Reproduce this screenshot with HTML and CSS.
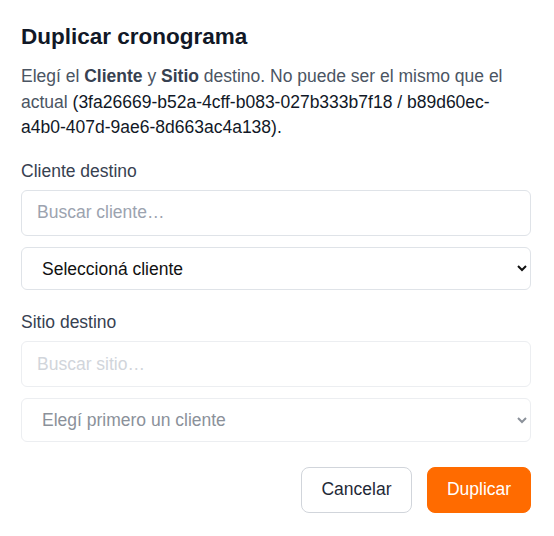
FILE: index.html
```html
<!DOCTYPE html>
<html lang="es">
<head>
<meta charset="utf-8">
<title>Duplicar cronograma</title>
<link rel="stylesheet" href="styles.css">
</head>
<body>
<div class="dialog">
  <h2 class="title">Duplicar cronograma</h2>
  <p class="desc">Elegí el <strong>Cliente</strong> y <strong>Sitio</strong> destino. No puede ser el mismo que el actual <span class="ids">(3fa26669-b52a-4cff-b083-027b333b7f18 / b89d60ec-a4b0-407d-9ae6-8d663ac4a138).</span></p>

  <label class="label first">Cliente destino</label>
  <input class="input" type="text" placeholder="Buscar cliente…">
  <select class="select">
    <option>Seleccioná cliente</option>
  </select>

  <label class="label second">Sitio destino</label>
  <input class="input" type="text" placeholder="Buscar sitio…" disabled>
  <select class="select" disabled>
    <option>Elegí primero un cliente</option>
  </select>

  <div class="actions">
    <button class="btn btn-cancel" type="button">Cancelar</button>
    <button class="btn btn-primary" type="button">Duplicar</button>
  </div>
</div>
</body>
</html>
```

FILE: styles.css
```css
html, body {
  margin: 0;
  padding: 0;
  background: #ffffff;
}

body {
  font-family: "Liberation Sans", Arial, sans-serif;
  color: #111827;
}

.dialog {
  width: 510px;
  padding: 23px 0 0 21px;
  display: flex;
  flex-direction: column;
}

.title {
  margin: 0;
  font-size: 22.5px;
  line-height: 28px;
  font-weight: 700;
  color: #111827;
}

.desc {
  margin: 13px 0 0;
  font-size: 17.5px;
  line-height: 25.6px;
  color: #4b5563;
}

.desc strong {
  color: #374151;
}

.ids {
  color: #111827;
}

.label {
  font-size: 17.5px;
  line-height: 24px;
  color: #374151;
}

.label.first {
  margin-top: 18px;
}

.label.second {
  margin-top: 20px;
}

.input {
  box-sizing: border-box;
  margin: 7px 0 0;
  width: 510px;
  height: 46px;
  padding: 0 15px;
  border: 1px solid #dfe3e8;
  border-radius: 6px;
  font-family: inherit;
  font-size: 17.5px;
  color: #111827;
  background: #ffffff;
  outline: none;
}

.input::placeholder {
  color: #9ca3af;
}

.input:disabled {
  border-color: #eceef1;
  background: #ffffff;
}

.input:disabled::placeholder {
  color: #d1d5db;
}

.select {
  box-sizing: border-box;
  margin: 11px 0 0;
  width: 510px;
  height: 43.5px;
  padding: 0 16px;
  border: 1px solid #dfe3e8;
  border-radius: 6px;
  font-family: inherit;
  font-size: 17.5px;
  color: #111111;
  background-color: #ffffff;
}

.select:disabled {
  border-color: #eceef1;
  color: #8b919a;
  opacity: 1;
}

.actions {
  margin-top: 25px;
  display: flex;
  justify-content: flex-end;
  gap: 15px;
}

.btn {
  box-sizing: border-box;
  height: 46px;
  border-radius: 8px;
  font-family: inherit;
  font-size: 17.5px;
  cursor: pointer;
}

.btn-cancel {
  width: 111px;
  background: #ffffff;
  border: 1px solid #d1d5db;
  color: #1f2937;
}

.btn-primary {
  width: 104px;
  background: #ff6b00;
  border: 1px solid #ff6b00;
  color: #ffffff;
}
```
